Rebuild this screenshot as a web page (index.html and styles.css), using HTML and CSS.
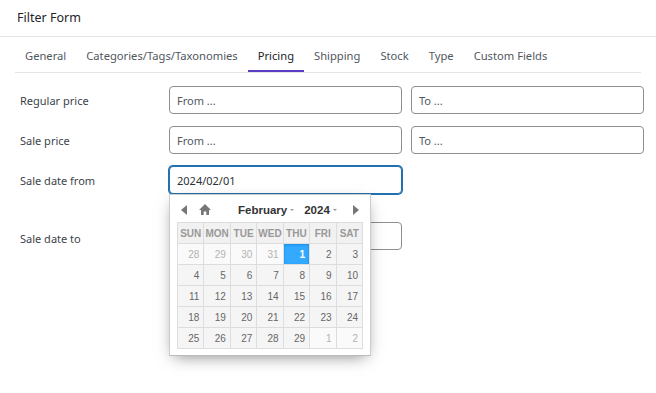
FILE: index.html
```html
<!DOCTYPE html>
<html lang="en">
<head>
    <meta charset="UTF-8">
    <meta name="viewport" content="width=device-width, initial-scale=1.0">
    <title>Filter Form</title>
    <link rel="stylesheet" href="styles.css">
</head>
<body>
    <div class="panel">
        <div class="panel-title">Filter Form</div>

        <ul class="tabs">
            <li class="tab">General</li>
            <li class="tab">Categories/Tags/Taxonomies</li>
            <li class="tab active">Pricing</li>
            <li class="tab">Shipping</li>
            <li class="tab">Stock</li>
            <li class="tab">Type</li>
            <li class="tab">Custom Fields</li>
        </ul>

        <div class="form">
            <div class="row">
                <label class="label">Regular price</label>
                <input class="field" type="text" placeholder="From ...">
                <input class="field" type="text" placeholder="To ...">
            </div>
            <div class="row">
                <label class="label">Sale price</label>
                <input class="field" type="text" placeholder="From ...">
                <input class="field" type="text" placeholder="To ...">
            </div>
            <div class="row date-row">
                <label class="label">Sale date from</label>
                <div class="date-wrap">
                    <input class="field focused" type="text" value="2024/02/01">

                    <!-- datepicker popup -->
                    <div class="picker">
                        <div class="picker-head">
                            <span class="nav prev"><svg width="7" height="10" viewBox="0 0 7 10"><path d="M6 0 L0 5 L6 10 Z" fill="#555"/></svg></span>
                            <span class="nav home"><svg width="12" height="11" viewBox="0 0 12 11"><path d="M6 0 L12 6 L10 6 L10 11 L7.3 11 L7.3 7.5 L4.7 7.5 L4.7 11 L2 11 L2 6 L0 6 Z" fill="#555"/></svg></span>
                            <span class="month">February<i class="caret"></i></span>
                            <span class="year">2024<i class="caret"></i></span>
                            <span class="nav next"><svg width="7" height="10" viewBox="0 0 7 10"><path d="M1 0 L7 5 L1 10 Z" fill="#555"/></svg></span>
                        </div>
                        <table class="cal">
                            <tr><th>SUN</th><th>MON</th><th>TUE</th><th>WED</th><th>THU</th><th>FRI</th><th>SAT</th></tr>
                            <tr><td class="other">28</td><td class="other">29</td><td class="other">30</td><td class="other">31</td><td class="current">1</td><td>2</td><td>3</td></tr>
                            <tr><td>4</td><td>5</td><td>6</td><td>7</td><td>8</td><td>9</td><td>10</td></tr>
                            <tr><td>11</td><td>12</td><td>13</td><td>14</td><td>15</td><td>16</td><td>17</td></tr>
                            <tr><td>18</td><td>19</td><td>20</td><td>21</td><td>22</td><td>23</td><td>24</td></tr>
                            <tr><td>25</td><td>26</td><td>27</td><td>28</td><td>29</td><td class="other">1</td><td class="other">2</td></tr>
                        </table>
                    </div>
                </div>
            </div>
            <div class="row">
                <label class="label label-low">Sale date to</label>
                <input class="field" type="text">
            </div>
        </div>
    </div>
</body>
</html>
```

FILE: styles.css
```css
html, body {
    height: 100%;
}
body {
    margin: 0;
    background: #fff;
    color: #1d2327;
    font-family: "Segoe UI", "Noto Sans", sans-serif;
    font-size: 11px;
}
.panel {
    min-height: 393px;
}
.panel-title {
    height: 36px;
    line-height: 36px;
    padding-left: 17px;
    font-size: 12.5px;
    border-bottom: 1px solid #e2e4e7;
}
.tabs {
    display: flex;
    list-style: none;
    margin: 0 15px;
    padding: 0;
    border-bottom: 1px solid #e2e4e7;
}
.tab {
    height: 33px;
    line-height: 38px;
    padding: 0 10px;
    font-size: 11.2px;
    color: #50575e;
    border-bottom: 2px solid transparent;
}
.tab.active {
    color: #1d2327;
    border-bottom-color: #5b3cc4;
}
.form {
    padding: 13px 12px 0 20px;
}
.row {
    display: flex;
    align-items: center;
    gap: 9px;
    margin-bottom: 12px;
}
.date-row {
    margin-bottom: 28px;
}
.label {
    width: 140px;
    color: #3c434a;
}
.label-low {
    padding-top: 4px;
}
.field {
    box-sizing: border-box;
    width: 233px;
    height: 28px;
    margin: 0;
    padding: 0 7px;
    border: 1px solid #8c8f94;
    border-radius: 4px;
    font-family: inherit;
    font-size: 11px;
    color: #2c3338;
    background: #fff;
}
.field::placeholder {
    color: #50575e;
}
.field.focused {
    border-color: #2271b1;
    box-shadow: 0 0 0 1px #2271b1;
    outline: none;
}
.date-wrap {
    position: relative;
}
/* datepicker */
.picker {
    position: absolute;
    left: 0;
    top: 28px;
    z-index: 20;
    width: 186px;
    padding: 2px 7px 6px 7px;
    background: #fff;
    border: 1px solid #ccc;
    border-bottom-color: #bbb;
    box-shadow: 0 5px 15px -5px rgba(0, 0, 0, 0.5);
    font-family: "Liberation Sans", Arial, sans-serif;
}
.picker-head {
    display: flex;
    align-items: center;
    height: 25px;
}
.nav {
    display: flex;
    align-items: center;
    opacity: 0.8;
}
.prev {
    margin-left: 4px;
}
.home {
    margin-left: 11px;
}
.month {
    margin-left: 27px;
}
.year {
    margin-left: 10px;
}
.next {
    margin-left: auto;
    margin-right: 4px;
}
.month, .year {
    font-size: 11.5px;
    font-weight: bold;
    color: #333;
}
.caret {
    display: inline-block;
    width: 0;
    height: 0;
    margin-left: 3px;
    vertical-align: middle;
    border-left: 2.5px solid transparent;
    border-right: 2.5px solid transparent;
    border-top: 2.5px solid #999;
}
.cal {
    width: 186px;
    border-collapse: collapse;
    table-layout: fixed;
}
.cal th, .cal td {
    border: 1px solid #ddd;
    padding: 0;
    height: 20px;
    font-size: 10px;
}
.cal th {
    background: #f1f1f1;
    color: #999;
    text-align: center;
}
.cal td {
    background: #f5f5f5;
    color: #666;
    text-align: right;
    padding-right: 4px;
}
.cal td.other {
    color: #b3b3b3;
    background: #fafafa;
}
.cal td.current {
    background: #33aaff;
    box-shadow: #178fe5 0 1px 3px 0 inset;
    color: #fff;
    font-weight: bold;
}
```
